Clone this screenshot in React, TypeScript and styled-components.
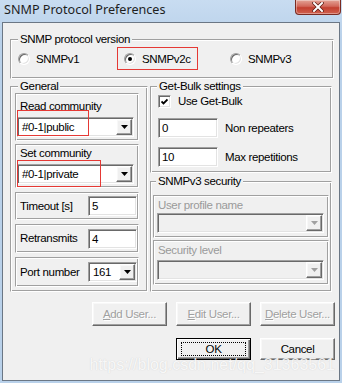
import React from 'react'
import styled, { createGlobalStyle, css } from 'styled-components'

const GlobalStyle = createGlobalStyle`
  html, body {
    margin: 0;
    padding: 0;
    background: #bcd4ed;
  }
`

const UI_FONT = `"Liberation Sans", Arial, sans-serif`

// classic win32 3d edges
const sunken = css`
  border: 1px solid;
  border-color: #a0a0a0 #fff #fff #a0a0a0;
  box-shadow: inset 1px 1px 0 #696969, inset -1px -1px 0 #e3e3e3;
`

const raised = css`
  border: 1px solid;
  border-color: #fff #696969 #696969 #fff;
  box-shadow: inset -1px -1px 0 #a0a0a0, inset 1px 1px 0 #f8f8f8;
`

const etched = css`
  border: 1px solid;
  border-color: #a0a0a0 #fff #fff #a0a0a0;
  box-shadow: inset 1px 1px 0 #fff, inset -1px -1px 0 #a0a0a0;
`

const Window = styled.div`
  position: relative;
  width: 342px;
  height: 383px;
  box-sizing: border-box;
  display: flex;
  flex-direction: column;
  background: linear-gradient(#c8dcf1, #b9d1ea 40px);
  font-family: ${UI_FONT};
  font-size: 11.5px;
  letter-spacing: -0.35px;
  color: #000;
  overflow: hidden;
`

const TitleBar = styled.div`
  height: 22px;
  display: flex;
  justify-content: space-between;
  align-items: flex-start;
  padding-left: 4px;
`

const Title = styled.div`
  font-family: "Noto Sans", "Liberation Sans", sans-serif;
  font-size: 12.6px;
  letter-spacing: 0;
  line-height: 20px;
  color: #1e1e1e;
`

const CloseButton = styled.div`
  width: 46px;
  height: 15px;
  margin-right: 1px;
  box-sizing: border-box;
  border: 1px solid #7a2b22;
  border-top: none;
  border-radius: 0 0 4px 4px;
  background: linear-gradient(#e3a497, #d2675a 45%, #c33f30 55%, #d0624f);
  box-shadow: inset 0 0 0 1px rgba(255, 255, 255, 0.35);
  display: flex;
  align-items: center;
  justify-content: center;
`

const Client = styled.div`
  flex: 1;
  margin: 0 2px 2px 2px;
  border: 1px solid #6b7785;
  background: #f0f0f0;
  padding: 10px 4px 0 7px;
  display: flex;
  flex-direction: column;
`

const Group = styled.fieldset<{ $pad: string }>`
  ${etched};
  margin: 0;
  min-width: 0;
  padding: ${(p) => p.$pad};
`

const Legend = styled.legend<{ $indent: number }>`
  padding: 0 2px;
  margin-left: ${(p) => p.$indent}px;
  line-height: 13px;
  background: #f0f0f0;
`

const VersionGroup = styled(Group)`
  margin-right: 1px;
`

const RadioRow = styled.div`
  display: grid;
  grid-template-columns: 99px 113px 1fr;
  align-items: center;
  height: 23px;
  margin-top: 1px;
`

const RadioOption = styled.div<{ $marked?: boolean }>`
  display: flex;
  align-items: center;
  gap: 6px;
  box-sizing: border-box;
  height: 23px;
  ${(p) =>
    p.$marked &&
    css`
      width: 81px;
      border: 1px solid #e53935;
      padding-left: 6px;
    `}
`

const RadioCircle = styled.span<{ $checked?: boolean }>`
  ${sunken};
  box-sizing: border-box;
  width: 12px;
  height: 12px;
  border-radius: 50%;
  background: #fff;
  display: flex;
  align-items: center;
  justify-content: center;
  &::after {
    content: '';
    width: 4px;
    height: 4px;
    border-radius: 50%;
    background: ${(p) => (p.$checked ? '#000' : 'transparent')};
  }
`

const Columns = styled.div`
  display: grid;
  grid-template-columns: 138px 182px;
  column-gap: 2px;
  align-items: start;
  margin-top: 1px;
`

const Side = styled.div`
  display: flex;
  flex-direction: column;
  gap: 2px;
`

const Panel = styled.div<{ $pad: string; $gap: number; $mt?: number }>`
  ${etched};
  position: relative;
  display: flex;
  flex-direction: column;
  gap: ${(p) => p.$gap}px;
  padding: ${(p) => p.$pad};
  margin-top: ${(p) => p.$mt ?? 0}px;
`

const FieldPanel = styled.div<{ $h: number }>`
  ${etched};
  box-sizing: border-box;
  height: ${(p) => p.$h}px;
  margin-top: 4px;
  display: flex;
  align-items: center;
  justify-content: space-between;
  padding: 0 1px 0 4px;
`

const Caption = styled.span<{ $disabled?: boolean }>`
  line-height: 15px;
  white-space: nowrap;
  color: ${(p) => (p.$disabled ? '#9a9a9a' : '#000')};
`

const Combo = styled.div<{ $width: number; $disabled?: boolean; $ml?: number }>`
  ${sunken};
  box-sizing: border-box;
  width: ${(p) => p.$width}px;
  height: 20px;
  padding: 1px;
  margin-left: ${(p) => p.$ml ?? 0}px;
  display: flex;
  background: ${(p) => (p.$disabled ? '#f0f0f0' : '#fff')};
`

const ComboValue = styled.span`
  flex: 1;
  padding-left: 3px;
  line-height: 16px;
  white-space: nowrap;
  overflow: hidden;
`

const DropButton = styled.span`
  ${raised};
  box-sizing: border-box;
  width: 16px;
  height: 16px;
  background: #f0f0f0;
  display: flex;
  align-items: center;
  justify-content: center;
`

const TextField = styled.div<{ $width: number }>`
  ${sunken};
  box-sizing: border-box;
  width: ${(p) => p.$width}px;
  height: 20px;
  background: #fff;
  padding-left: 3px;
  line-height: 18px;
`

const CheckRow = styled.div`
  display: flex;
  align-items: center;
  gap: 7px;
  height: 14px;
  margin-top: 1px;
`

const CheckBox = styled.span`
  ${sunken};
  box-sizing: border-box;
  width: 13px;
  height: 13px;
  background: #fff;
  display: flex;
  align-items: center;
  justify-content: center;
`

const InputRow = styled.div<{ $mt: number }>`
  display: flex;
  align-items: center;
  gap: 7px;
  margin-top: ${(p) => p.$mt}px;
`

const Marker = styled.div<{ $left: number; $top: number; $w: number; $h: number }>`
  position: absolute;
  left: ${(p) => p.$left}px;
  top: ${(p) => p.$top}px;
  width: ${(p) => p.$w}px;
  height: ${(p) => p.$h}px;
  box-sizing: border-box;
  border: 1px solid #e53935;
  pointer-events: none;
`

const ButtonRow = styled.div<{ $mt: number }>`
  display: flex;
  justify-content: flex-end;
  gap: 9px;
  margin-top: ${(p) => p.$mt}px;
`

const Button = styled.div<{ $h: number; $disabled?: boolean; $default?: boolean }>`
  ${raised};
  box-sizing: border-box;
  width: 75px;
  height: ${(p) => p.$h}px;
  background: #f0f0f0;
  display: flex;
  align-items: center;
  justify-content: center;
  line-height: 15px;
  white-space: nowrap;
  color: ${(p) => (p.$disabled ? '#a0a0a0' : '#000')};
  text-shadow: ${(p) => (p.$disabled ? '1px 1px 0 #fff' : 'none')};
  ${(p) =>
    p.$default &&
    css`
      border: 1px solid #000;
      box-shadow: inset 1px 1px 0 #fff, inset -1px -1px 0 #696969, inset -2px -2px 0 #a0a0a0;
    `}
`

const FocusRing = styled.span`
  flex: 1;
  align-self: stretch;
  margin: 3px 4px;
  border: 1px dotted #000;
  display: flex;
  align-items: center;
  justify-content: center;
`

const Watermark = styled.div`
  position: absolute;
  right: 7px;
  top: 355px;
  font-family: "Liberation Sans", Arial, sans-serif;
  font-size: 16px;
  letter-spacing: 0;
  line-height: 20px;
  color: rgba(255, 255, 255, 0.85);
  text-shadow: 0 0 1px rgba(150, 150, 150, 0.4);
  pointer-events: none;
`

const DownArrow = ({ disabled }: { disabled?: boolean }) => (
  <svg width="7" height="4" viewBox="0 0 7 4">
    <polygon points="0,0 7,0 3.5,4" fill={disabled ? '#a0a0a0' : '#000'} />
  </svg>
)

const ComboBox = ({
  value,
  width,
  disabled,
  ml,
}: {
  value?: string
  width: number
  disabled?: boolean
  ml?: number
}) => (
  <Combo $width={width} $disabled={disabled} $ml={ml}>
    <ComboValue>{value}</ComboValue>
    <DropButton>
      <DownArrow disabled={disabled} />
    </DropButton>
  </Combo>
)

const App = () => {
  return (
    <Window>
      <GlobalStyle />
      <TitleBar>
        <Title>SNMP Protocol Preferences</Title>
        <CloseButton>
          <svg width="12" height="10" viewBox="0 0 12 10">
            <path d="M2 1 L10 9 M10 1 L2 9" stroke="#5a1a12" strokeWidth="3.4" strokeLinecap="square" />
            <path d="M2 1 L10 9 M10 1 L2 9" stroke="#fff" strokeWidth="2" strokeLinecap="square" />
          </svg>
        </CloseButton>
      </TitleBar>

      <Client>
        <VersionGroup $pad="0 7px 8px 7px">
          <Legend $indent={0}>SNMP protocol version</Legend>
          <RadioRow>
            <RadioOption>
              <RadioCircle />
              <span>SNMPv1</span>
            </RadioOption>
            <RadioOption $marked>
              <RadioCircle $checked />
              <span>SNMPv2c</span>
            </RadioOption>
            <RadioOption>
              <RadioCircle />
              <span>SNMPv3</span>
            </RadioOption>
          </RadioRow>
        </VersionGroup>

        <Columns>
          <Group $pad="0 8px 4px 4px">
            <Legend $indent={3}>General</Legend>
            <Panel $pad="5px 4px 3px 0" $gap={3}>
              <Caption style={{ paddingLeft: 4 }}>Read community</Caption>
              <ComboBox value="#0-1|public" width={117} ml={1} />
              <Marker $left={1} $top={16} $w={72} $h={26} />
            </Panel>
            <Panel $pad="1px 4px 3px 0" $gap={3} $mt={3}>
              <Caption style={{ paddingLeft: 4 }}>Set community</Caption>
              <ComboBox value="#0-1|private" width={117} ml={1} />
              <Marker $left={1} $top={15} $w={84} $h={27} />
            </Panel>
            <FieldPanel $h={28}>
              <Caption>Timeout [s]</Caption>
              <TextField $width={49}>5</TextField>
            </FieldPanel>
            <FieldPanel $h={29}>
              <Caption>Retransmits</Caption>
              <TextField $width={49}>4</TextField>
            </FieldPanel>
            <FieldPanel $h={30}>
              <Caption>Port number</Caption>
              <ComboBox value="161" width={49} />
            </FieldPanel>
          </Group>

          <Side>
            <Group $pad="0 7px 5px 7px">
              <Legend $indent={-1}>Get-Bulk settings</Legend>
              <CheckRow>
                <CheckBox>
                  <svg width="7" height="7" viewBox="0 0 7 7">
                    <path d="M0.5 3.5 L2.5 5.5 L6.5 1.5" stroke="#000" strokeWidth="1.8" fill="none" />
                  </svg>
                </CheckBox>
                <span>Use Get-Bulk</span>
              </CheckRow>
              <InputRow $mt={10}>
                <TextField $width={60}>0</TextField>
                <Caption>Non repeaters</Caption>
              </InputRow>
              <InputRow $mt={9}>
                <TextField $width={60}>10</TextField>
                <Caption>Max repetitions</Caption>
              </InputRow>
            </Group>

            <Group $pad="7px 2px 6px 2px">
              <Legend $indent={3}>SNMPv3 security</Legend>
              <Panel $pad="2px 4px 4px 3px" $gap={1}>
                <Caption $disabled style={{ paddingLeft: 1, lineHeight: '14px' }}>
                  User profile name
                </Caption>
                <ComboBox width={167} disabled />
              </Panel>
              <Panel $pad="2px 4px 4px 3px" $gap={3} $mt={2}>
                <Caption $disabled style={{ paddingLeft: 1, lineHeight: '14px' }}>
                  Security level
                </Caption>
                <ComboBox width={167} disabled />
              </Panel>
            </Group>
          </Side>
        </Columns>

        <ButtonRow $mt={10}>
          <Button $h={24} $disabled>
            <span>
              <u>A</u>dd User...
            </span>
          </Button>
          <Button $h={24} $disabled>
            <span>
              <u>E</u>dit User...
            </span>
          </Button>
          <Button $h={24} $disabled>
            <span>
              <u>D</u>elete User...
            </span>
          </Button>
        </ButtonRow>
        <ButtonRow $mt={12}>
          <Button $h={22} $default>
            <FocusRing>OK</FocusRing>
          </Button>
          <Button $h={22}>Cancel</Button>
        </ButtonRow>
      </Client>

      <Watermark>https://blog.csdn.net/qq_31363561</Watermark>
    </Window>
  )
}

export default App
